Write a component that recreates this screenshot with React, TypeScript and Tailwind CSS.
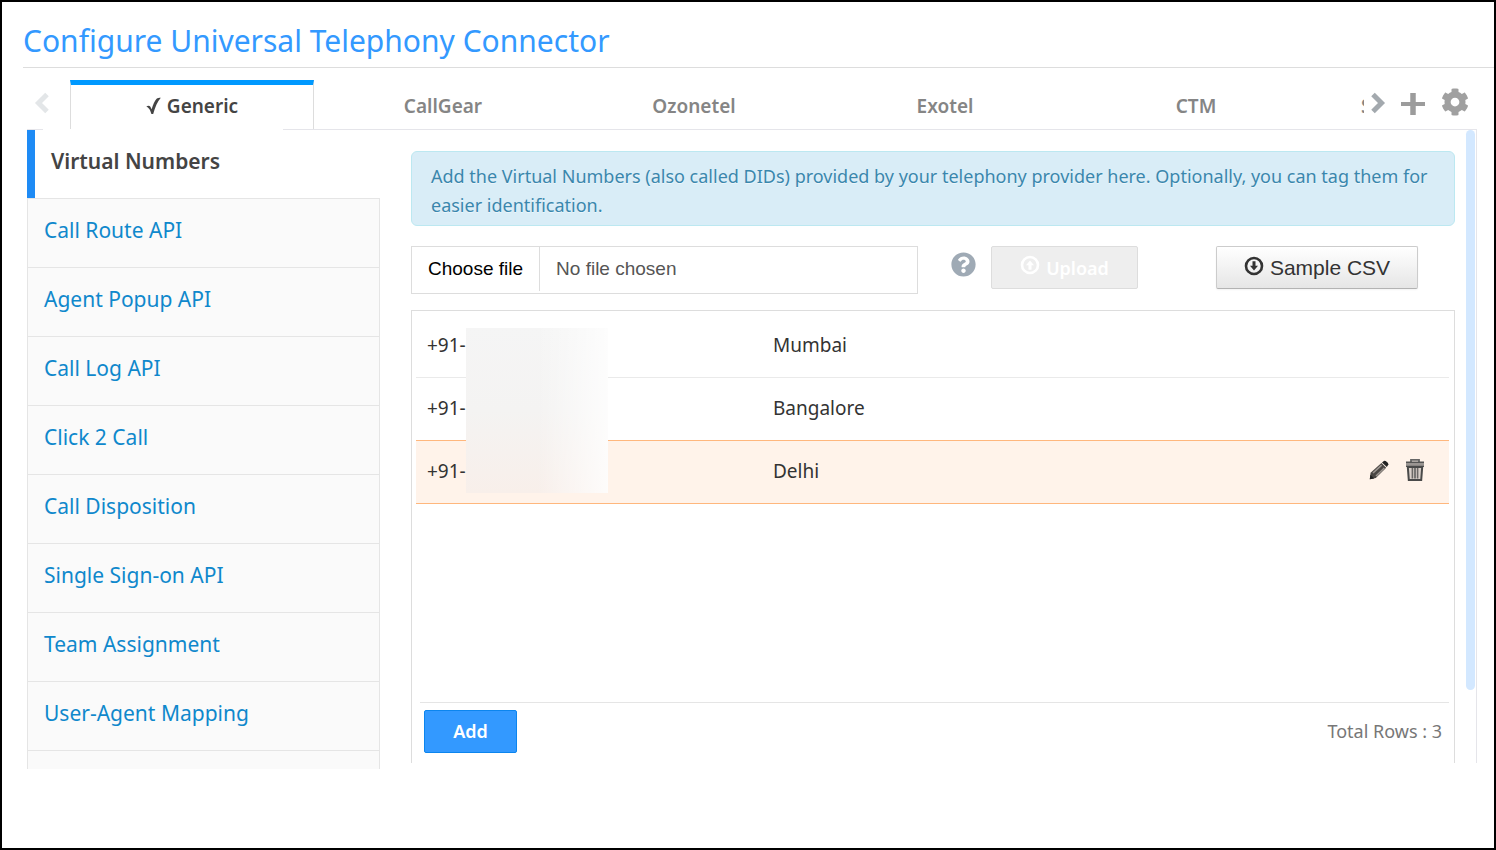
import { useState } from 'react';
import { FaCog, FaQuestionCircle } from 'react-icons/fa';

const providers = ['Generic', 'CallGear', 'Ozonetel', 'Exotel', 'CTM'];

const sections = [
  'Call Route API',
  'Agent Popup API',
  'Call Log API',
  'Click 2 Call',
  'Call Disposition',
  'Single Sign-on API',
  'Team Assignment',
  'User-Agent Mapping',
];

const numbers = [
  { number: '+91-', tag: 'Mumbai' },
  { number: '+91-', tag: 'Bangalore' },
  { number: '+91-', tag: 'Delhi' },
];

function Chevron({ left = false }: { left?: boolean }) {
  return (
    <svg viewBox="0 0 16 22" className={left ? 'h-[22px] w-4 rotate-180' : 'h-[22px] w-4'} aria-hidden="true">
      <path d="M3 2.5 11.5 11 3 19.5" fill="none" stroke="currentColor" strokeWidth="5" />
    </svg>
  );
}

function CircleArrow({ up = false }: { up?: boolean }) {
  return (
    <svg viewBox="0 0 20 20" className={up ? 'h-5 w-5 rotate-180' : 'h-5 w-5'} aria-hidden="true">
      <circle cx="10" cy="10" r="8" fill="none" stroke="currentColor" strokeWidth="2.6" />
      <path d="M8.5 5.2h3v4.6H14L10 14.4 6 9.8h2.5z" fill="currentColor" />
    </svg>
  );
}

function CheckIcon() {
  return (
    <svg viewBox="0 0 15 18" className="h-[18px] w-[15px]" aria-hidden="true">
      <path d="M.3 9.8C1.6 8.2 3.6 8.4 4.4 9.8l1.2 2.4C7.2 7.4 8.8 3.6 10.6 1.8 11.6.9 13 .8 14.8.8 11.4 4.6 9 10.4 7.2 17H5.4C4.4 13.6 3 10.4.3 9.8z" fill="currentColor" />
    </svg>
  );
}

function PencilIcon() {
  return (
    <svg viewBox="0 0 20 20" className="h-5 w-5" aria-hidden="true">
      <path d="M.8 19.2l.8-6.4L12.4 3l4.8 4.8L6.8 18z" fill="#4a4643" />
      <path d="M4 13l8.6-7.8M7 16l8.4-8" stroke="#9d9691" strokeWidth="1.6" />
      <path d="M.8 19.2l.6-4.4 3.8 3.8z" fill="#222" />
      <path d="M13 2.4 15.2.8c2 0 4 1.8 4.2 3.8L17.8 7z" fill="#222" />
    </svg>
  );
}

function TrashIcon() {
  return (
    <svg viewBox="0 0 20 24" className="h-6 w-5" aria-hidden="true">
      <path d="M6 4V1.8h8V4" fill="none" stroke="#666" strokeWidth="1.8" />
      <path d="M1 4h18v4.4H1z" fill="#9a9592" />
      <path d="M1 4.2h18M1 8.4h18" stroke="#555" strokeWidth="1.4" />
      <path d="M2.8 9h14.4l-1 13H3.8z" fill="#d8cfc9" stroke="#4a4a4a" strokeWidth="2" />
      <path d="M7.4 10v10.5M12.6 10v10.5" stroke="#6b6866" strokeWidth="1.6" />
      <path d="M10 10v10.5" stroke="#4f4f4f" strokeWidth="1.4" />
    </svg>
  );
}

export default function App() {
  const [tab, setTab] = useState('Generic');
  const [fileName, setFileName] = useState('');

  return (
    <div className="min-h-screen border-2 border-black bg-white font-['Noto_Sans','Open_Sans',sans-serif] text-[#333]">
      <header className="ml-[21px] border-b border-[#ddd] pt-[18px] pb-1.5">
        <h1 className="text-[30px] leading-[41px] text-[#3399ff]">Configure Universal Telephony Connector</h1>
      </header>

      <div className="ml-[25px] mr-[17px]">
        <div className="flex items-start pt-3">
          <button aria-label="Previous providers" className="mt-3 w-[43px] pl-[7px] text-[#e3e6e8]">
            <Chevron left />
          </button>
          <div role="tablist" className="flex min-w-0 flex-1 gap-[7px] overflow-hidden">
            {providers.map(name => (
              <button
                key={name}
                role="tab"
                aria-selected={tab === name}
                onClick={() => setTab(name)}
                className={
                  tab === name
                    ? 'flex h-[49px] w-[244px] shrink-0 items-center justify-center gap-1.5 border-x border-t-[5px] border-x-[#ddd] border-t-[#0099ff] pb-0.5 text-[19px] font-semibold text-[#444]'
                    : 'flex h-[49px] w-[244px] shrink-0 items-center justify-center gap-1.5 border-t-[5px] border-transparent pb-0.5 text-[19px] font-semibold text-[#858585]'
                }
              >
                {tab === name && <CheckIcon />}
                {name}
              </button>
            ))}
            <button role="tab" aria-selected={false} className="h-[49px] w-[244px] shrink-0 border-t-[5px] border-transparent pb-0.5 pl-9 text-left text-[19px] font-semibold text-[#858585]">
              S
            </button>
          </div>
          <div className="flex w-[113px] items-start">
            <button aria-label="Next providers" className="ml-1.5 mt-3 text-[#a3a9ae]">
              <Chevron />
            </button>
            <button aria-label="Add provider" className="ml-[15px] mt-3 text-[#9c9c9c]">
              <svg viewBox="0 0 24 24" className="h-6 w-6" aria-hidden="true">
                <path d="M12 1v22" stroke="currentColor" strokeWidth="5.5" />
                <path d="M0 12h24" stroke="currentColor" strokeWidth="4" />
              </svg>
            </button>
            <button aria-label="Settings" className="ml-4 mt-2 text-[#a0a0a0]">
              <FaCog size={28} />
            </button>
          </div>
        </div>

        {/* rule under the tabs, open below the active one */}
        <div className="flex">
          <div className="w-4 border-t border-[#e5e5ea]" />
          <div className="ml-60 flex-1 border-t border-[#e5e5ea]" />
        </div>

        <div className="flex items-start">
          <nav className="w-[353px] shrink-0">
            <a href="#virtual-numbers" className="block h-[68px] border-l-8 border-[#1e8bf5] pt-4 pl-4 text-[21px] leading-[30px] font-semibold text-[#444]">
              Virtual Numbers
            </a>
            <ul className="border-x border-[#e5e5e5] bg-[#fafafa]">
              {sections.map(name => (
                <li key={name} className="h-[69px] border-t border-[#e5e5e5]">
                  <a href="#" className="block px-4 pt-4 text-[21px] leading-[30px] text-[#0f88cc]">{name}</a>
                </li>
              ))}
              <li className="h-[19px] border-t border-[#e5e5e5]" />
            </ul>
          </nav>

          <main className="flex h-[633px] min-w-0 flex-1 border-r border-[#e5e5ea] pl-[31px]">
            <div className="flex min-w-0 flex-1 flex-col pt-[21px]">
              <p className="rounded-md border border-[#bce8f1] bg-[#d9edf7] px-[19px] pt-2.5 pb-[5px] text-[18px] leading-[29px] text-[#3a87ad] [text-shadow:0_1px_0_rgba(255,255,255,0.5)]">
                Add the Virtual Numbers (also called DIDs) provided by your telephony provider here. Optionally, you can tag them for easier identification.
              </p>

              <div className="mt-5 flex items-start">
                <label className="flex h-12 w-[507px] border border-[#ddd] font-['Liberation_Sans',sans-serif] text-[19px] leading-[44px]">
                  <input
                    type="file"
                    className="sr-only"
                    onChange={e => setFileName(e.target.files?.[0]?.name ?? '')}
                  />
                  <span className="mb-0.5 border-r border-[#ddd] px-4 text-black">Choose file</span>
                  <span className="pl-4 text-[#555]">{fileName || 'No file chosen'}</span>
                </label>
                <button aria-label="Help" className="ml-[33px] mt-1.5 text-[#9faab5]">
                  <FaQuestionCircle size={25} />
                </button>
                <button disabled className="ml-[15px] flex h-[43px] w-[147px] items-center justify-center gap-1.5 rounded-xs border border-[#ddd] bg-[#eee] text-[18px] font-semibold text-white">
                  <span className="pb-1.5"><CircleArrow up /></span>
                  <span className="pt-0.5">Upload</span>
                </button>
                <button className="ml-auto mr-[37px] flex h-[43px] w-[202px] items-center justify-center gap-1.5 rounded-xs border border-[#ccc] border-b-[#b3b3b3] bg-linear-to-b from-white to-[#e6e6e6] font-['Liberation_Sans',sans-serif] text-[21px] text-[#333] shadow-xs">
                  <span className="pb-1"><CircleArrow /></span>
                  Sample CSV
                </button>
              </div>

              <section className="mt-4 flex flex-1 flex-col border border-b-0 border-[#ddd] pt-[3px] pr-[5px] pl-1">
                <div className="relative">
                  <table className="w-full table-fixed text-[19px]">
                    <tbody>
                      {numbers.map((row, i) => (
                        <tr
                          key={row.tag}
                          className={
                            i === 2
                              ? 'h-[63px] border-y border-[#ffb77d] bg-[#fff3ea]'
                              : i === 0
                                ? 'h-[63px] border-b border-[#eaeaea]'
                                : 'h-[63px]'
                          }
                        >
                          <td className="w-[346px] pl-[11px]">{row.number}</td>
                          <td className="pl-[11px]">{row.tag}</td>
                          <td className="w-[110px]">
                            {i === 2 && (
                              <div className="flex items-center gap-4 pb-1 pl-[30px]">
                                <button aria-label="Edit"><PencilIcon /></button>
                                <button aria-label="Delete"><TrashIcon /></button>
                              </div>
                            )}
                          </td>
                        </tr>
                      ))}
                    </tbody>
                  </table>
                  {/* masks the subscriber part of each number */}
                  <div className="absolute top-[14px] left-[50px] h-[165px] w-[142px] bg-linear-to-b from-[#f5f5f5] via-[#f4f3f2] via-50% to-[#f8efea]">
                    <div className="h-full bg-linear-to-r from-transparent from-50% to-white/80" />
                  </div>
                </div>
                <div className="mt-auto ml-1 flex items-start justify-between border-t border-[#e5e5e5] pt-[7px] pr-[7px] pb-2.5 pl-1">
                  <button className="h-[43px] w-[93px] rounded-xs border border-[#0c85ee] bg-[#3399ff] text-[18px] font-semibold text-white">Add</button>
                  <span className="pt-2 text-[18px] leading-[27px] text-[#777]">Total Rows : 3</span>
                </div>
              </section>
            </div>
            <div className="mr-px ml-[11px] h-[560px] w-[9px] rounded-full bg-[#d3e8ff]" />
          </main>
        </div>
      </div>
    </div>
  );
}
